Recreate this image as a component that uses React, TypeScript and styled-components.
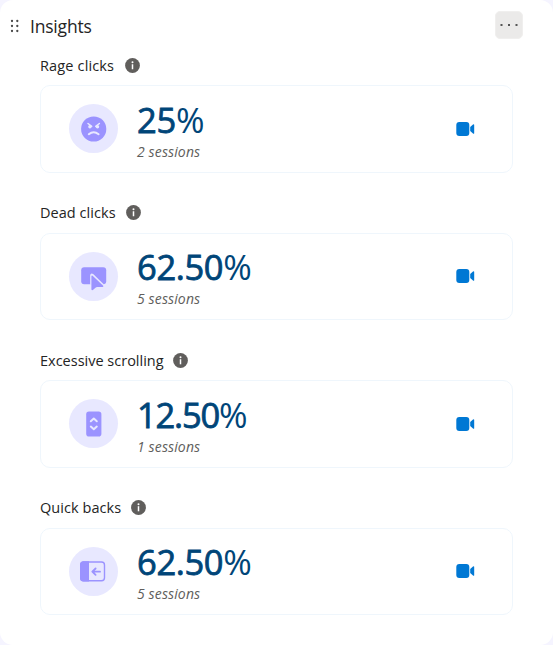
import React from "react";
import styled, { createGlobalStyle } from "styled-components";

const GlobalStyle = createGlobalStyle`
  * { box-sizing: border-box; }
  body { margin: 0; background: #f5f4ff; }
`;

const Panel = styled.main`
  width: 553px;
  height: 645px;
  background: #fff;
  border-radius: 13px;
  overflow: hidden;
  font-family: "Open Sans", "Noto Sans", sans-serif;
  color: #242424;
`;

const Header = styled.header`
  display: flex;
  align-items: flex-start;
  height: 54px;
  padding: 11px 30px 0 10px;
`;

const Grip = styled.svg`
  width: 10px;
  height: 14px;
  margin: 8px 10px 0 0;
  fill: #4a4a4a;
`;

const Title = styled.h1`
  flex: 1;
  margin: 0;
  font-size: 17.5px;
  line-height: 31px;
  font-weight: 400;
  letter-spacing: -0.2px;
`;

const MoreButton = styled.button`
  display: flex;
  align-items: center;
  justify-content: center;
  width: 28px;
  height: 28px;
  padding: 0;
  border: 1px solid #f0efee;
  border-radius: 5px;
  background: #ebeae9;
`;

const List = styled.div`
  display: flex;
  flex-direction: column;
  gap: 37.5px;
  padding: 0 40px;
`;

const Section = styled.section`
  height: 110px;
`;

const LabelRow = styled.div`
  display: flex;
  align-items: center;
  gap: 10px;
  height: 22px;
  margin-bottom: 9px;
`;

const Label = styled.h2<{ $width: number; $spacing: number }>`
  width: ${(p) => p.$width}px;
  margin: 0;
  padding-top: 1px;
  font-size: 14.5px;
  line-height: 22px;
  font-weight: 400;
  white-space: nowrap;
  letter-spacing: ${(p) => p.$spacing}px;
`;

const Card = styled.div`
  display: flex;
  align-items: center;
  width: 473px;
  height: 87.5px;
  padding: 0 37px 0 28px;
  border: 1px solid #eff6fc;
  border-radius: 10px;
`;

const IconCircle = styled.div`
  width: 49px;
  height: 49px;
  margin-right: 19px;
  border-radius: 50%;
  background: #e8e8ff;
  svg { display: block; }
`;

const Figures = styled.div`
  flex: 1;
  padding-top: 3px;
`;

const Value = styled.div<{ $spacing: number }>`
  height: 43px;
  font-size: 34.5px;
  line-height: 42px;
  font-weight: 400;
  color: #004578;
  letter-spacing: ${(p) => p.$spacing}px;
`;

const Digits = styled.span`
  -webkit-text-stroke: 0.8px #004578;
`;

const Sessions = styled.div`
  font-size: 14px;
  line-height: 20px;
  font-style: italic;
  color: #605e5c;
  letter-spacing: 0.13px;
`;

const InfoIcon = () => (
  <svg width="15" height="15" viewBox="0 0 15 15">
    <circle cx="7.5" cy="7.5" r="7.4" fill="#605e5c" />
    <circle cx="7.5" cy="4.2" r="1" fill="#fff" />
    <path d="M7.5 6.2V11.3" stroke="#fff" strokeWidth="1.5" />
  </svg>
);

const CameraIcon = () => (
  <svg width="19" height="16" viewBox="0 0 19 16">
    <rect x="0.3" y="1" width="13" height="14" rx="3" fill="#0078d4" />
    <path d="M14.2 6.1L17 3.4Q18.2 2.7 18.2 4V12Q18.2 13.3 17 12.6L14.2 10Z" fill="#0078d4" />
  </svg>
);

const RageIcon = () => (
  <svg width="49" height="49" viewBox="0 0 49 49">
    <circle cx="24.7" cy="25" r="12.6" fill="#9b93ff" />
    <g fill="none" stroke="#e8e8ff" strokeWidth="1.5" strokeLinecap="round">
      <path d="M19 19.5L22.7 22.4M30.4 19.5L26.7 22.4" />
      <path d="M19.8 30.2Q24.7 26.2 29.6 30.2" strokeWidth="2" />
    </g>
    <circle cx="20.9" cy="22.8" r="1.7" fill="#e8e8ff" />
    <circle cx="28.5" cy="22.8" r="1.7" fill="#e8e8ff" />
  </svg>
);

const DeadIcon = () => (
  <svg width="49" height="49" viewBox="0 0 49 49">
    <rect x="12.2" y="15.2" width="25" height="17" rx="3" fill="#9b93ff" />
    <path d="M21.2 32.8V23Q21.8 20.5 24.2 22L35.2 32.8Z" fill="#e8e8ff" />
    <path
      d="M22.4 37.2V24.2Q22.6 22.9 23.6 23.7L34.2 33.8Q34.8 35 33.4 35H28.2Q27.2 35 26.5 35.7L23.9 38Q22.6 38.5 22.4 37.2Z"
      fill="#9b93ff"
    />
  </svg>
);

const ScrollIcon = () => (
  <svg width="49" height="49" viewBox="0 0 49 49">
    <rect x="17.2" y="12.6" width="15.2" height="25" rx="2.8" fill="#9b93ff" />
    <path
      d="M21.8 22.3L24.8 19.6L27.8 22.3M21.8 27.6L24.8 30.3L27.8 27.6"
      fill="none"
      stroke="#e8e8ff"
      strokeWidth="2"
      strokeLinecap="round"
      strokeLinejoin="round"
    />
  </svg>
);

const BackIcon = () => (
  <svg width="49" height="49" viewBox="0 0 49 49">
    <rect x="11.7" y="15" width="23.8" height="18.8" rx="3" fill="none" stroke="#9b93ff" strokeWidth="1.4" />
    <path d="M11 18Q11 14.3 14.5 14.3H20V34.5H14.5Q11 34.5 11 31Z" fill="#9b93ff" />
    <path
      d="M31 24.7H23.6M26.6 21.5L23.3 24.7L26.6 27.9"
      fill="none"
      stroke="#9b93ff"
      strokeWidth="1.8"
      strokeLinecap="round"
      strokeLinejoin="round"
    />
  </svg>
);

const insights = [
  { label: "Rage clicks", width: 75, spacing: 0.15, value: "25", valueSpacing: -0.2, sessions: "2 sessions", Icon: RageIcon },
  { label: "Dead clicks", width: 76, spacing: 0.05, value: "62.50", valueSpacing: -0.35, sessions: "5 sessions", Icon: DeadIcon },
  { label: "Excessive scrolling", width: 123, spacing: 0, value: "12.50", valueSpacing: -1.2, sessions: "1 sessions", Icon: ScrollIcon },
  { label: "Quick backs", width: 81, spacing: 0.05, value: "62.50", valueSpacing: -0.35, sessions: "5 sessions", Icon: BackIcon },
];

export default function App() {
  return (
    <>
      <GlobalStyle />
      <Panel>
        <Header>
          <Grip viewBox="0 0 10 14">
            {[2, 7.3].map((x) => [2, 7, 12].map((y) => <circle key={`${x}-${y}`} cx={x} cy={y} r="1.15" />))}
          </Grip>
          <Title>Insights</Title>
          <MoreButton aria-label="More options">
            <svg width="20" height="4" viewBox="0 0 20 4" fill="#555">
              <rect x="1.5" y="1" width="2" height="2" />
              <rect x="9" y="1" width="2" height="2" />
              <rect x="16.5" y="1" width="2" height="2" />
            </svg>
          </MoreButton>
        </Header>
        <List>
          {insights.map(({ label, width, spacing, value, valueSpacing, sessions, Icon }) => (
            <Section key={label}>
              <LabelRow>
                <Label $width={width} $spacing={spacing}>{label}</Label>
                <InfoIcon />
              </LabelRow>
              <Card>
                <IconCircle><Icon /></IconCircle>
                <Figures>
                  <Value $spacing={valueSpacing}><Digits>{value}</Digits>%</Value>
                  <Sessions>{sessions}</Sessions>
                </Figures>
                <CameraIcon />
              </Card>
            </Section>
          ))}
        </List>
      </Panel>
    </>
  );
}
